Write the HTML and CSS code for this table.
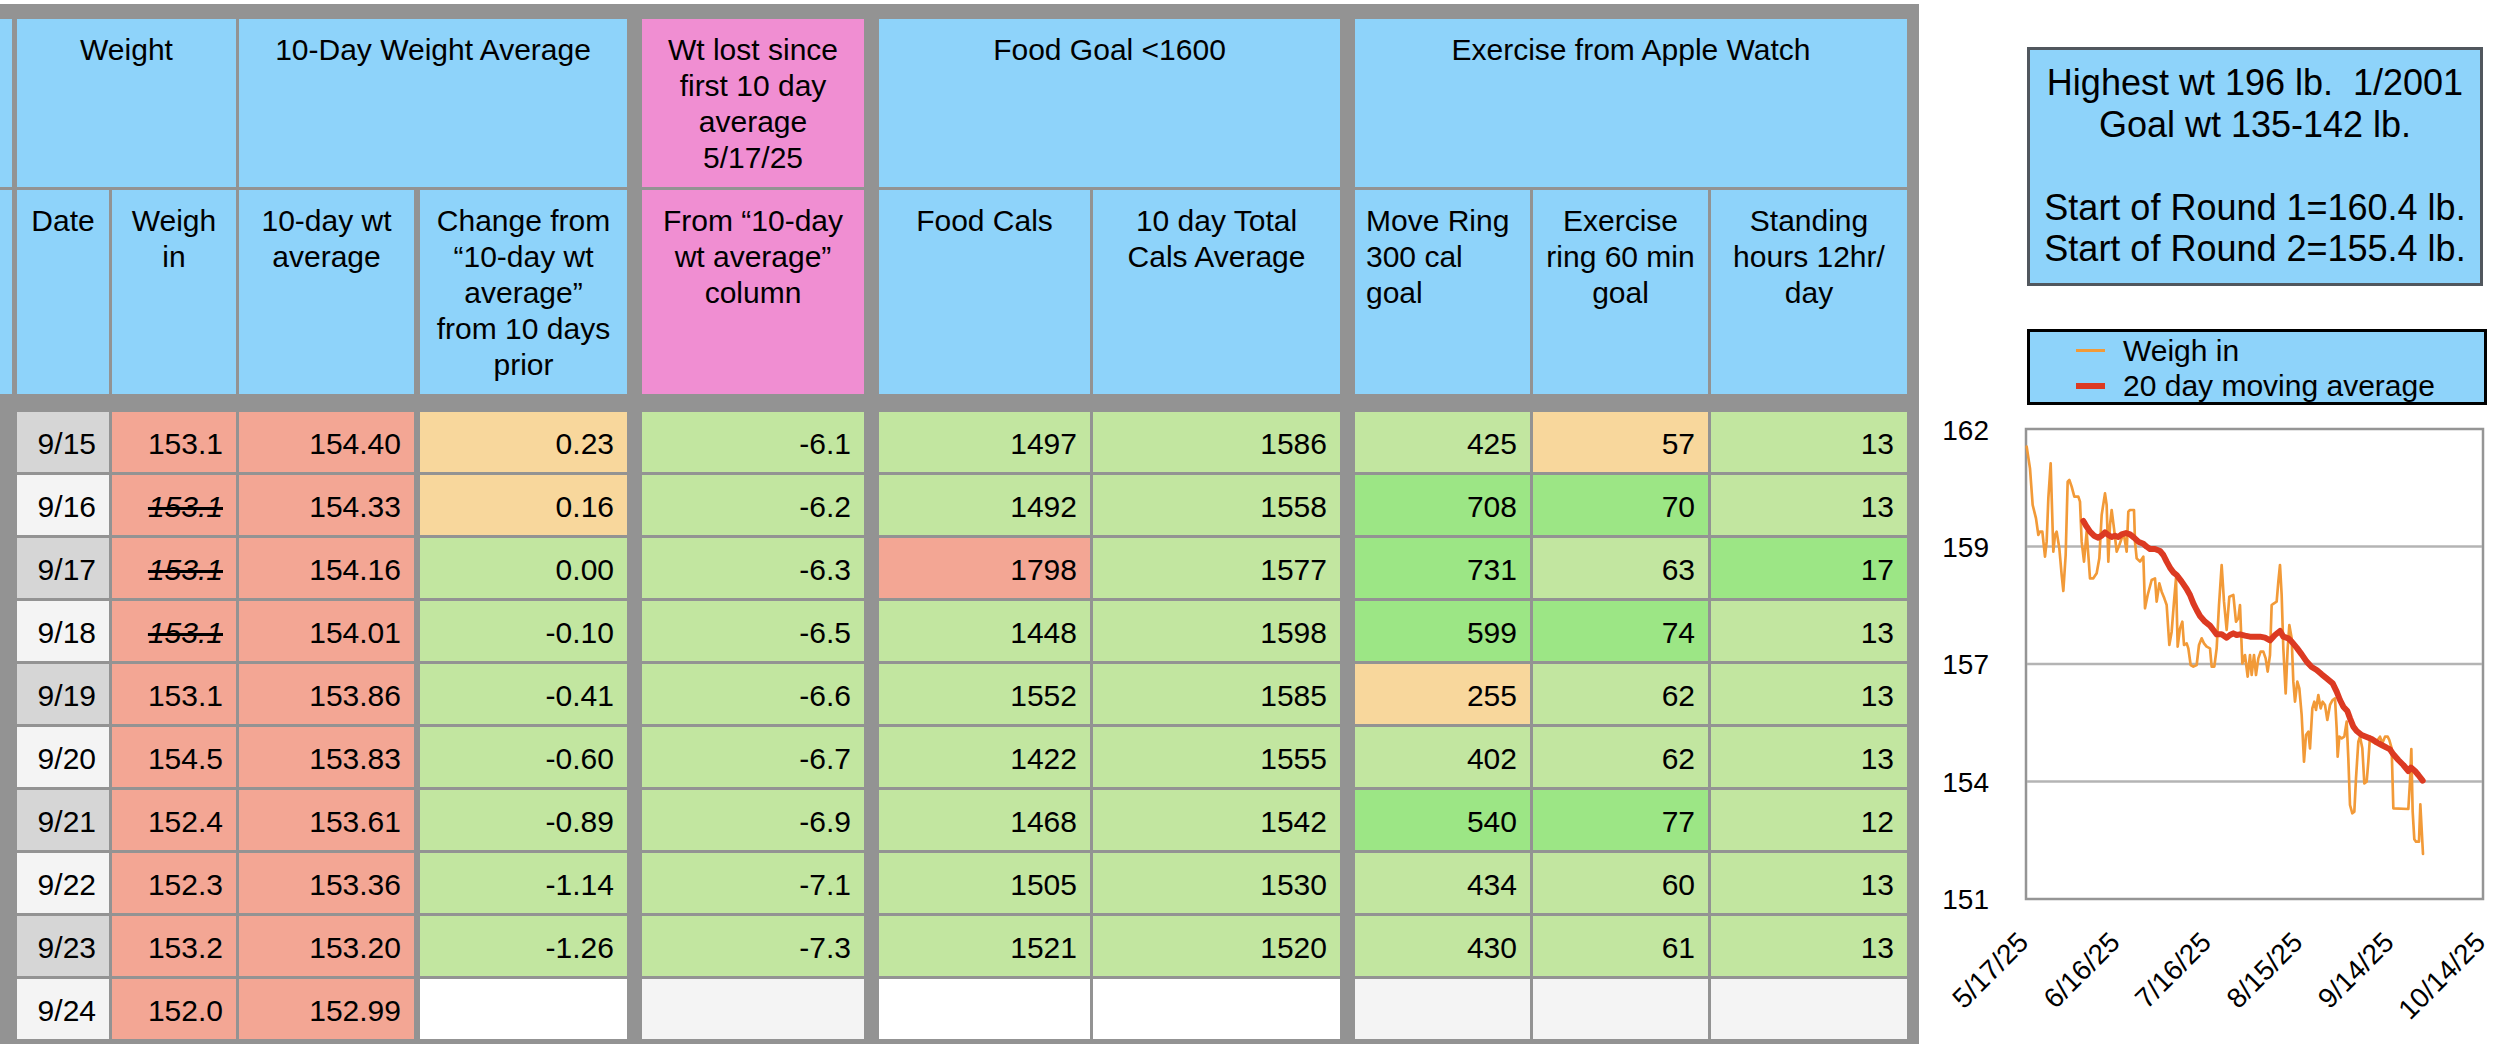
FILE: index.html
```html
<!DOCTYPE html>
<html>
<head>
<meta charset="utf-8">
<title>Weight tracker</title>
<link rel="stylesheet" href="styles.css">
</head>
<body>
<div class="page">
  <div class="sheet">
    <div class="sl hd"></div>
    <div class="c hd g span2">Weight</div>
    <div class="c hd span2">10-Day Weight Average</div>
    <div class="c hd pk g">Wt lost since<br>first 10 day<br>average<br>5/17/25</div>
    <div class="c hd g span2">Food Goal &lt;1600</div>
    <div class="c hd g span3">Exercise from Apple Watch</div>

    <div class="sl hd"></div>
    <div class="c hd g">Date</div>
    <div class="c hd">Weigh<br>in</div>
    <div class="c hd">10-day wt<br>average</div>
    <div class="c hd m">Change from<br>“10-day wt<br>average”<br>from 10 days<br>prior</div>
    <div class="c hd pk g">From “10-day<br>wt average”<br>column</div>
    <div class="c hd g">Food Cals</div>
    <div class="c hd">10 day Total<br>Cals Average</div>
    <div class="c hd g left">Move Ring<br>300 cal<br>goal</div>
    <div class="c hd">Exercise<br>ring 60 min<br>goal</div>
    <div class="c hd">Standing<br>hours 12hr/<br>day</div>

    <div class="spacer"></div>

    <div class="sl"></div>
    <div class="c d g dd">9/15</div>
    <div class="c d sal">153.1</div>
    <div class="c d sal">154.40</div>
    <div class="c d m org">0.23</div>
    <div class="c d g lg">-6.1</div>
    <div class="c d g lg">1497</div>
    <div class="c d lg">1586</div>
    <div class="c d g lg">425</div>
    <div class="c d org">57</div>
    <div class="c d lg">13</div>

    <div class="sl"></div>
    <div class="c d g dl">9/16</div>
    <div class="c d sal"><span class="strike">153.1</span></div>
    <div class="c d sal">154.33</div>
    <div class="c d m org">0.16</div>
    <div class="c d g lg">-6.2</div>
    <div class="c d g lg">1492</div>
    <div class="c d lg">1558</div>
    <div class="c d g hi">708</div>
    <div class="c d hi">70</div>
    <div class="c d lg">13</div>

    <div class="sl"></div>
    <div class="c d g dd">9/17</div>
    <div class="c d sal"><span class="strike">153.1</span></div>
    <div class="c d sal">154.16</div>
    <div class="c d m lg">0.00</div>
    <div class="c d g lg">-6.3</div>
    <div class="c d g sal">1798</div>
    <div class="c d lg">1577</div>
    <div class="c d g hi">731</div>
    <div class="c d lg">63</div>
    <div class="c d hi">17</div>

    <div class="sl"></div>
    <div class="c d g dl">9/18</div>
    <div class="c d sal"><span class="strike">153.1</span></div>
    <div class="c d sal">154.01</div>
    <div class="c d m lg">-0.10</div>
    <div class="c d g lg">-6.5</div>
    <div class="c d g lg">1448</div>
    <div class="c d lg">1598</div>
    <div class="c d g hi">599</div>
    <div class="c d hi">74</div>
    <div class="c d lg">13</div>

    <div class="sl"></div>
    <div class="c d g dd">9/19</div>
    <div class="c d sal">153.1</div>
    <div class="c d sal">153.86</div>
    <div class="c d m lg">-0.41</div>
    <div class="c d g lg">-6.6</div>
    <div class="c d g lg">1552</div>
    <div class="c d lg">1585</div>
    <div class="c d g org">255</div>
    <div class="c d lg">62</div>
    <div class="c d lg">13</div>

    <div class="sl"></div>
    <div class="c d g dl">9/20</div>
    <div class="c d sal">154.5</div>
    <div class="c d sal">153.83</div>
    <div class="c d m lg">-0.60</div>
    <div class="c d g lg">-6.7</div>
    <div class="c d g lg">1422</div>
    <div class="c d lg">1555</div>
    <div class="c d g lg">402</div>
    <div class="c d lg">62</div>
    <div class="c d lg">13</div>

    <div class="sl"></div>
    <div class="c d g dd">9/21</div>
    <div class="c d sal">152.4</div>
    <div class="c d sal">153.61</div>
    <div class="c d m lg">-0.89</div>
    <div class="c d g lg">-6.9</div>
    <div class="c d g lg">1468</div>
    <div class="c d lg">1542</div>
    <div class="c d g hi">540</div>
    <div class="c d hi">77</div>
    <div class="c d lg">12</div>

    <div class="sl"></div>
    <div class="c d g dl">9/22</div>
    <div class="c d sal">152.3</div>
    <div class="c d sal">153.36</div>
    <div class="c d m lg">-1.14</div>
    <div class="c d g lg">-7.1</div>
    <div class="c d g lg">1505</div>
    <div class="c d lg">1530</div>
    <div class="c d g lg">434</div>
    <div class="c d lg">60</div>
    <div class="c d lg">13</div>

    <div class="sl"></div>
    <div class="c d g dd">9/23</div>
    <div class="c d sal">153.2</div>
    <div class="c d sal">153.20</div>
    <div class="c d m lg">-1.26</div>
    <div class="c d g lg">-7.3</div>
    <div class="c d g lg">1521</div>
    <div class="c d lg">1520</div>
    <div class="c d g lg">430</div>
    <div class="c d lg">61</div>
    <div class="c d lg">13</div>

    <div class="sl"></div>
    <div class="c d g dl">9/24</div>
    <div class="c d sal">152.0</div>
    <div class="c d sal">152.99</div>
    <div class="c d m wh"></div>
    <div class="c d g em"></div>
    <div class="c d g wh"></div>
    <div class="c d wh"></div>
    <div class="c d g em"></div>
    <div class="c d em"></div>
    <div class="c d em"></div>
  </div>

  <aside class="side">
    <div class="info">Highest wt 196 lb.&nbsp; 1/2001<br>Goal wt 135-142 lb.<br><br>Start of Round 1=160.4 lb.<br>Start of Round 2=155.4 lb.</div>
    <div class="legend">
      <div class="lrow"><span class="mark mk-o"></span><span>Weigh in</span></div>
      <div class="lrow"><span class="mark mk-r"></span><span>20 day moving average</span></div>
    </div>
    <svg class="chart" width="583" height="639" viewBox="1919 405 583 639" xmlns="http://www.w3.org/2000/svg">
      <rect class="plot" x="2026" y="429" width="457" height="470"/>
      <line class="grid" x1="2027" y1="546.5" x2="2482" y2="546.5"/>
      <line class="grid" x1="2027" y1="664" x2="2482" y2="664"/>
      <line class="grid" x1="2027" y1="781.5" x2="2482" y2="781.5"/>
      <g class="ylab">
        <text x="1989" y="440">162</text>
        <text x="1989" y="557">159</text>
        <text x="1989" y="674">157</text>
        <text x="1989" y="792">154</text>
        <text x="1989" y="909">151</text>
      </g>
      <g class="xlab">
        <text transform="translate(2030 944) rotate(-45)">5/17/25</text>
        <text transform="translate(2121.4 944) rotate(-45)">6/16/25</text>
        <text transform="translate(2212.8 944) rotate(-45)">7/16/25</text>
        <text transform="translate(2304.2 944) rotate(-45)">8/15/25</text>
        <text transform="translate(2395.6 944) rotate(-45)">9/14/25</text>
        <text transform="translate(2487 944) rotate(-45)">10/14/25</text>
      </g>
      <g transform="translate(2020 415) scale(0.33333)">
        <polyline class="wline" points="20,95 30,160 38,270 48,310 55,360 60,350 67,350 75,425 80,380 85,250 92,145 100,410 105,360 110,350 118,400 125,480 130,528 137,420 143,200 148,195 155,215 163,245 175,245 180,260 185,380 192,440 200,350 205,420 210,490 220,490 230,475 238,430 245,300 255,235 260,270 265,440 270,330 275,285 282,340 290,410 298,390 305,370 312,360 320,410 325,290 330,285 342,285 345,380 350,430 360,440 370,425 375,580 383,540 395,495 405,490 410,560 418,505 425,530 433,550 440,570 448,690 455,650 462,560 468,490 473,695 480,640 487,620 492,690 500,685 505,700 512,750 520,755 530,750 537,690 545,670 552,685 560,695 570,700 575,755 583,755 590,700 597,570 605,450 612,560 620,645 628,545 640,540 648,620 655,610 660,570 667,745 675,720 683,785 690,720 695,780 702,720 708,780 715,730 722,710 730,710 737,730 743,770 750,720 755,570 762,565 770,560 775,500 780,450 785,540 790,700 797,835 803,700 808,630 815,670 820,800 825,860 832,800 838,820 845,900 852,1040 858,960 865,950 870,1000 877,880 883,860 888,885 895,840 902,880 908,860 915,870 922,915 930,870 938,855 945,850 950,940 953,1025 958,965 965,970 973,965 980,920 985,1030 990,1170 997,1195 1003,1190 1008,1090 1015,980 1020,965 1027,1000 1033,1105 1040,1100 1045,1040 1050,965 1057,980 1065,985 1073,975 1080,965 1087,985 1095,965 1103,965 1108,975 1115,1000 1120,1180 1165,1182 1170,1100 1174,1002 1178,1190 1183,1273 1188,1280 1197,1280 1201,1168 1209,1317"/>
        <polyline class="aline" points="190,318 200,335 210,350 222,362 235,368 245,362 255,352 265,360 275,366 285,362 295,366 305,358 318,354 330,358 342,368 355,380 370,386 380,395 390,402 405,402 420,408 430,420 440,440 450,458 460,472 470,480 485,500 500,522 510,540 520,565 530,585 540,603 555,620 570,632 580,645 590,658 605,658 620,668 630,660 640,655 650,660 660,658 675,662 690,665 720,665 735,668 750,676 765,660 780,648 790,665 805,670 815,680 830,698 845,718 860,740 875,756 890,765 905,778 920,790 938,805 950,830 960,855 970,875 982,888 990,910 1000,935 1010,948 1025,960 1040,966 1055,972 1070,982 1085,990 1100,998 1110,1003 1120,1018 1135,1035 1150,1050 1165,1068 1173,1058 1185,1068 1195,1080 1208,1097"/>
      </g>
    </svg>
  </aside>
</div>
</body>
</html>
```

FILE: styles.css
```css
html, body {
  margin: 0;
  padding: 0;
  background: #ffffff;
  overflow: hidden;
}

.page {
  display: flex;
  align-items: flex-start;
  width: 2502px;
  height: 1044px;
}

.sheet {
  flex: none;
  display: grid;
  grid-template-columns: 2px 104px 124px 175px 210px 234px 223px 247px 187px 175px 196px;
  grid-template-rows: 168px 204px 12px repeat(10, 60px);
  column-gap: 3px;
  row-gap: 3px;
  background: #939393;
  padding: 15px 12px 6px 0;
  margin-top: 4px;
}

.c {
  font-family: "Liberation Sans", Arial, Helvetica, sans-serif;
  font-size: 30px;
  line-height: 36px;
  color: #000;
  box-sizing: border-box;
  white-space: nowrap;
}

.g { margin-left: 12px; }
.m { margin-left: 3px; }
.span2 { grid-column: span 2; }
.span3 { grid-column: span 3; }
.spacer { grid-column: 1 / -1; }

.hd {
  background: #8ed3fa;
  text-align: center;
  padding: 13px 6px 0;
}
.hd.left {
  text-align: left;
  padding-left: 11px;
}
.pk { background: #f08ed2; }

.d {
  text-align: right;
  padding: 14px 13px 0 0;
}

.strike {
  font-style: italic;
  text-decoration: line-through;
}

.dd { background: #d6d6d6; }
.dl { background: #f4f4f4; }
.sal { background: #f3a694; }
.org { background: #f8d79c; }
.lg { background: #c2e6a0; }
.hi { background: #9ce685; }
.wh { background: #ffffff; }
.em { background: #f4f4f4; }

.side {
  flex: none;
  width: 583px;
  display: flex;
  flex-direction: column;
}

.info {
  margin: 47px 0 0 108px;
  width: 456px;
  height: 239px;
  box-sizing: border-box;
  border: 3px solid #51575e;
  background: #8ed3fa;
  font-family: "Liberation Sans", Arial, Helvetica, sans-serif;
  font-size: 36px;
  line-height: 41.5px;
  text-align: center;
  padding-top: 12px;
  white-space: nowrap;
  color: #000;
}

.legend {
  margin: 43px 0 0 108px;
  width: 460px;
  height: 76px;
  box-sizing: border-box;
  border: 3px solid #000;
  background: #8ed3fa;
  padding-top: 1px;
  font-family: "Liberation Sans", Arial, Helvetica, sans-serif;
  font-size: 30px;
  color: #000;
}

.lrow {
  display: flex;
  align-items: center;
  height: 35px;
  line-height: 35px;
}

.mark {
  display: block;
  width: 29px;
  margin: 0 18px 0 46px;
}
.mk-o { height: 3px; background: #f29a38; }
.mk-r { height: 6px; background: #dc3a22; }

.chart {
  display: block;
}

.plot {
  fill: #ffffff;
  stroke: #959595;
  stroke-width: 2.5;
}
.grid {
  stroke: #b4b4b4;
  stroke-width: 2.7;
}
.ylab text {
  font-family: "Liberation Sans", Arial, Helvetica, sans-serif;
  font-size: 28px;
  fill: #000;
  text-anchor: end;
}
.xlab text {
  font-family: "Liberation Sans", Arial, Helvetica, sans-serif;
  font-size: 28px;
  fill: #000;
  text-anchor: end;
}
.wline {
  fill: none;
  stroke: #f29a38;
  stroke-width: 8;
  stroke-linejoin: round;
  stroke-linecap: round;
}
.aline {
  fill: none;
  stroke: #dc3a22;
  stroke-width: 18;
  stroke-linejoin: round;
  stroke-linecap: round;
}
```
